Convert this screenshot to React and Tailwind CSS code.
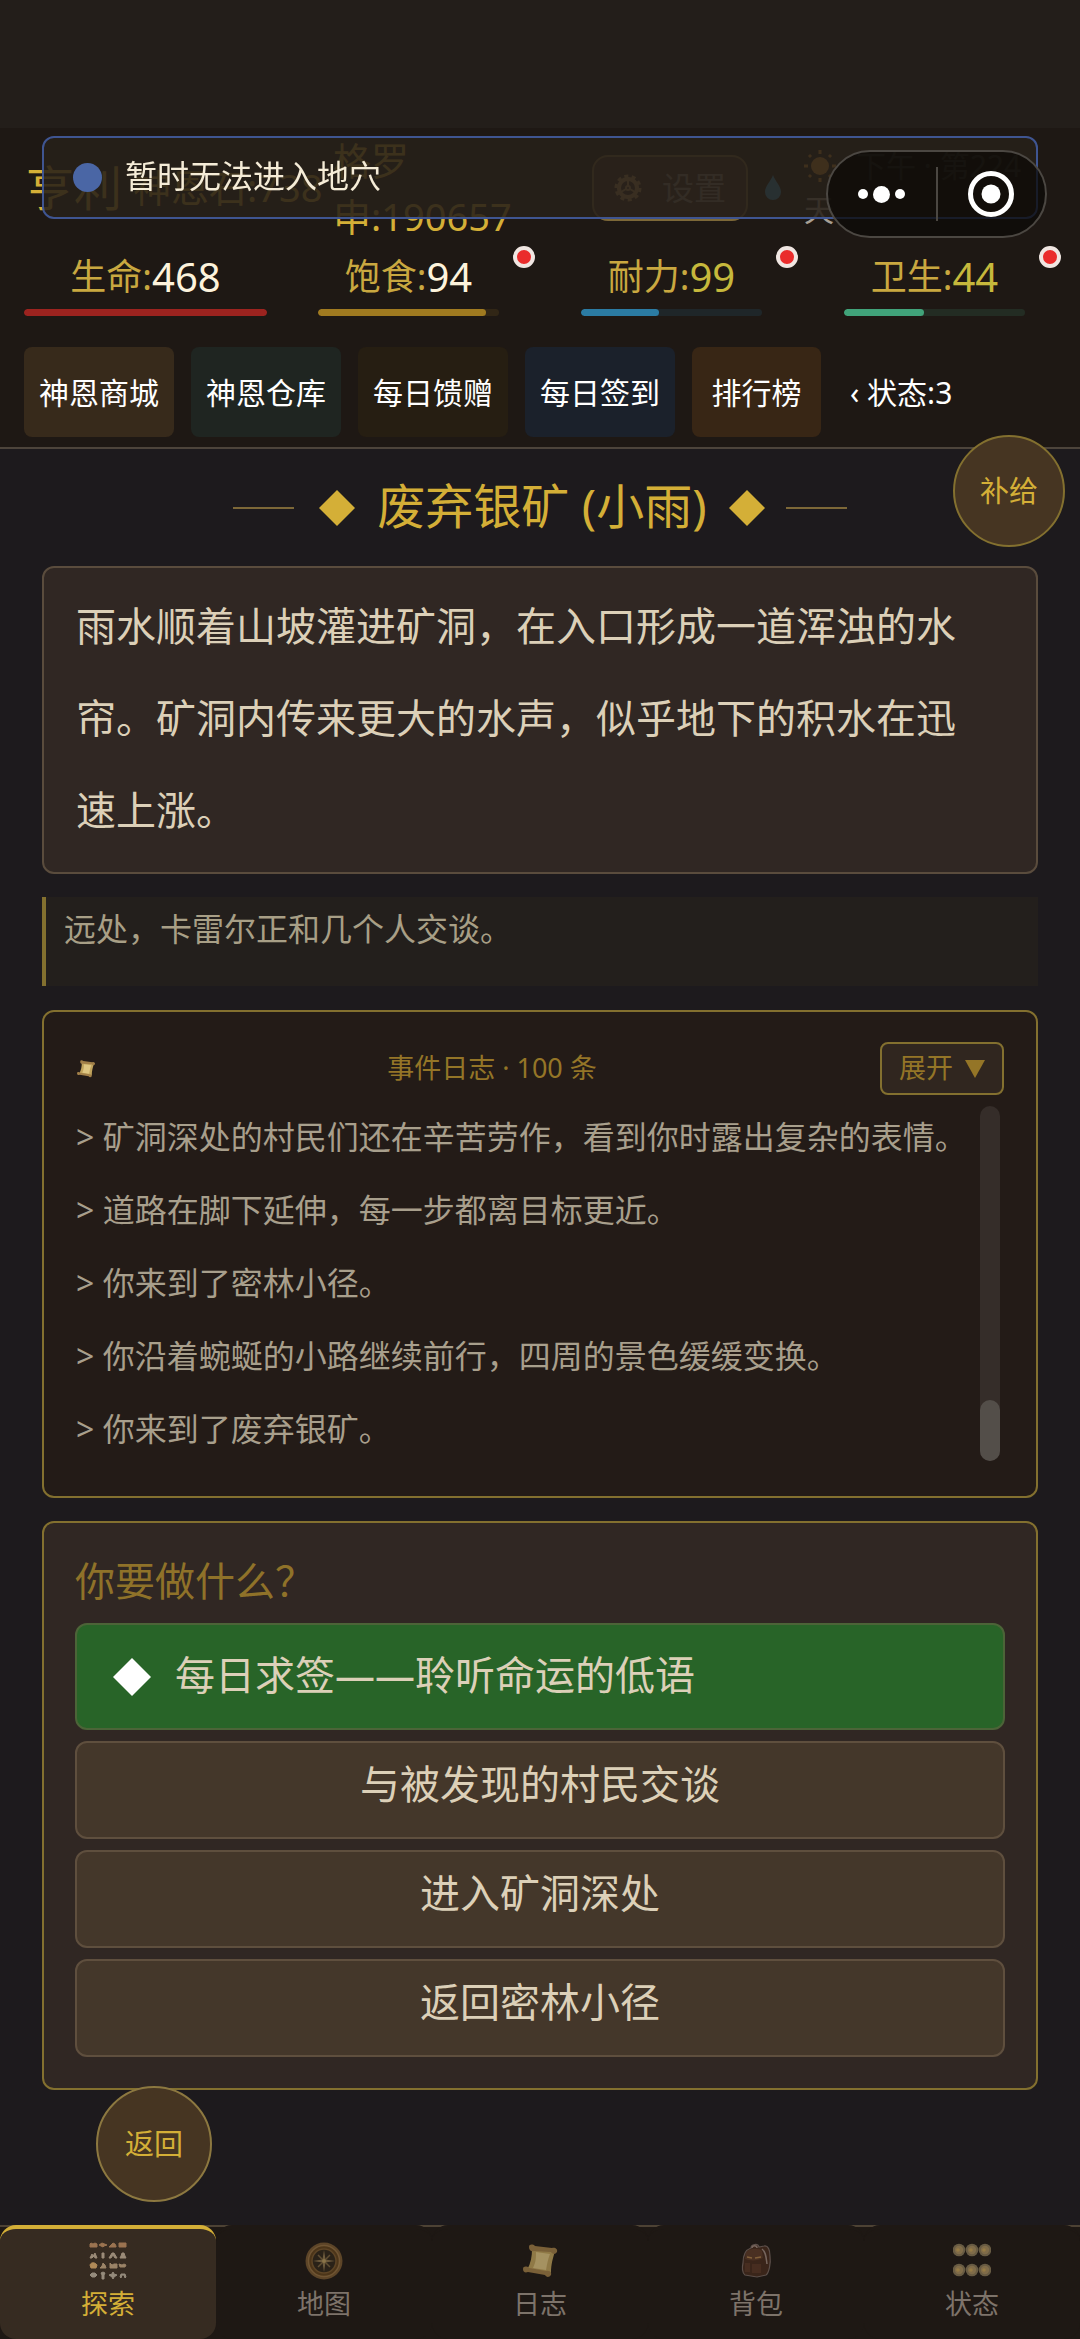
import clsx from 'clsx';

const stats = [
  { label: '生命', value: 468, percent: 100, alert: false, wide: true, bar: 'bg-[#9c231f]', track: 'bg-[#9c231f]/15', text: 'text-[#fdf3dc]' },
  { label: '饱食', value: 94, percent: 93, alert: true, bar: 'bg-[#a07a20]', track: 'bg-[#a07a20]/15', text: 'text-[#fdf3dc]' },
  { label: '耐力', value: 99, percent: 43, alert: true, bar: 'bg-[#2b7ba3]', track: 'bg-[#2b7ba3]/15', text: 'text-[#c6b83c]' },
  { label: '卫生', value: 44, percent: 44, alert: true, bar: 'bg-[#41a37a]', track: 'bg-[#41a37a]/15', text: 'text-[#c6b83c]' },
];

const shortcuts = [
  { label: '神恩商城', bg: 'bg-[#372a1b]' },
  { label: '神恩仓库', bg: 'bg-[#1f2521]' },
  { label: '每日馈赠', bg: 'bg-[#261e12]' },
  { label: '每日签到', bg: 'bg-[#1b212b]' },
  { label: '排行榜', bg: 'bg-[#382615]' },
];

const logs = [
  '矿洞深处的村民们还在辛苦劳作，看到你时露出复杂的表情。',
  '道路在脚下延伸，每一步都离目标更近。',
  '你来到了密林小径。',
  '你沿着蜿蜒的小路继续前行，四周的景色缓缓变换。',
  '你来到了废弃银矿。',
];

const choices = ['与被发现的村民交谈', '进入矿洞深处', '返回密林小径'];

function Diamond({ className }) {
  return (
    <svg viewBox="0 0 38 38" className={className} fill="currentColor" aria-hidden="true">
      <path d="M19 0L38 19L19 38L0 19Z" />
    </svg>
  );
}

function ScrollIcon({ className }) {
  return (
    <svg viewBox="0 0 38 38" className={className} aria-hidden="true">
      <path d="M11 7L34 9C32 16 30 22 30 31L6 28C10 21 11 14 11 7Z" fill="#c0a35c" />
      <path d="M15 10L29 12C27 17 26 22 25 28L12 26C15 20 15 16 15 10Z" fill="#dec682" />
      <path d="M8 5C8 2 12 2 14 4L31 6C34 5 37 7 36 10C34 13 31 12 30 10L13 9C10 10 8 8 8 5Z" fill="#a17f48" />
      <path d="M2 27C2 24 6 24 8 26L25 29C28 28 31 30 30 33C28 36 25 35 24 33L7 30C4 31 2 30 2 27Z" fill="#a17f48" />
    </svg>
  );
}

function ExploreIcon({ className }) {
  return (
    <svg viewBox="0 0 38 38" className={className} aria-hidden="true">
      <g fill="#9a7350" stroke="#9a7350">
        <path d="M1 5V2L2 1L4 2L6 1L8 2V5Z" />
        <path d="M10 3L13 1L18 3L15 4L14 5L12 4Z" />
        <path d="M20 5L22 3L24 1L26 2L27 4V5Z" />
        <path d="M30 1H37V5H30Z" />
      </g>
      <g fill="#9b8b78" stroke="#9b8b78">
        <path d="M1 16L3 12L4 14L6 11L8 16H6L5 14L3 16Z" />
        <path d="M13 11H15V16H13Z" />
        <path d="M20 16L23 11H25L28 16H26L24 13L22 16Z" />
        <path d="M33 11H35L36 14L37 16H31L32 14Z" />
      </g>
      <path d="M1 23C2 20 6 20 8 23L7 26H2Z" fill="#b08a58" stroke="#b08a58" />
      <g fill="#9a8367" stroke="#9a8367">
        <path d="M11 26L13 24L14 21L16 23L17 26Z" />
        <path d="M21 21L23 23L25 22L28 22V26H21Z" />
        <path d="M30 22L33 23L35 22L37 23L36 25H31Z" />
      </g>
      <g fill="#958b7c" stroke="#958b7c">
        <path d="M1 33L3 31H6L8 33L6 35H3Z" />
        <path d="M12 31L14 30L16 31L15 33V37H13V33Z" />
        <path d="M20 33L23 32L24 30L25 32L28 33L25 35L24 37L23 35Z" />
        <path d="M31 35L32 32H36L37 35L36 36L35 33H33L32 36Z" />
      </g>
    </svg>
  );
}

function CompassIcon({ className }) {
  return (
    <svg viewBox="0 0 38 38" className={className} aria-hidden="true">
      <circle cx="19" cy="19" r="18.5" fill="#5d4528" />
      <circle cx="19" cy="19" r="15.5" fill="#4c3519" stroke="#705533" strokeWidth="1.5" />
      <circle cx="19" cy="19" r="12" fill="#2a2218" stroke="#5e4526" strokeWidth="1.5" />
      <path d="M19 8L20.5 17.5L30 19L20.5 20.5L19 30L17.5 20.5L8 19L17.5 17.5Z" fill="#6c5a3c" />
      <path d="M13 13L25 25M25 13L13 25" stroke="#5f4e33" strokeWidth="1.5" />
      <circle cx="19" cy="19" r="2" fill="#8a7448" />
    </svg>
  );
}

function BackpackIcon({ className }) {
  return (
    <svg viewBox="0 0 38 38" className={className} aria-hidden="true">
      <path d="M14 6C14 2 21 1 22 5L27 4C31 3 33 8 33 14C34 21 32 31 29 33L20 35L8 33C5 31 5 25 6 21C6 14 8 8 14 6Z" fill="#3a251a" stroke="#5c4f4a" strokeWidth="1.2" />
      <path d="M9 10C13 6 22 6 25 9L26 16C21 19 13 19 8 17Z" fill="#4a3022" />
      <path d="M8 21H13V30H8ZM15 22H24V31H15Z" fill="#472d20" />
      <path d="M10 15L15 16M18 16L24 15" stroke="#82603a" strokeWidth="1.5" />
      <path d="M15 6C15 3 20 3 20 6M25 7C29 10 29 15 30 22" stroke="#77665e" strokeWidth="1.5" fill="none" />
    </svg>
  );
}

function StatusIcon({ className }) {
  return (
    <svg viewBox="0 0 38 38" className={className} aria-hidden="true">
      {[8, 28].map((y) =>
        [6, 19, 32].map((x) => (
          <g key={`${x}-${y}`}>
            <circle cx={x} cy={y} r="6.3" fill="#685b43" />
            <circle cx={x} cy={y} r="4.2" fill="#806c49" />
            <circle cx={x - 1} cy={y} r="1.8" fill="#967b45" />
          </g>
        ))
      )}
    </svg>
  );
}

function GearIcon({ className }) {
  return (
    <svg viewBox="0 0 28 28" className={className} fill="none" stroke="currentColor" aria-hidden="true">
      <circle cx="14" cy="14" r="9" strokeWidth="4" />
      <circle cx="14" cy="14" r="12" strokeWidth="3" strokeDasharray="4 3.5" />
      <circle cx="14" cy="14" r="2" strokeWidth="2" />
      <path d="M14 12V6M16 15L21 18M12 15L7 18" strokeWidth="2" />
    </svg>
  );
}

function SunIcon({ className }) {
  return (
    <svg viewBox="0 0 32 32" className={className} aria-hidden="true">
      <circle cx="16" cy="16" r="9" fill="#e39a32" />
      <path
        d="M16 0V4M16 28V32M0 16H4M28 16H32M5 5L7 7M25 25L27 27M5 27L7 25M25 7L27 5"
        stroke="#e39a32"
        strokeWidth="3"
      />
    </svg>
  );
}

const tabs = [
  { label: '探索', icon: ExploreIcon, active: true },
  { label: '地图', icon: CompassIcon },
  { label: '日志', icon: ScrollIcon, dim: true },
  { label: '背包', icon: BackpackIcon },
  { label: '状态', icon: StatusIcon },
];

function Stat({ stat }) {
  return (
    <div className={clsx('relative', !stat.wide && 'px-[31px]')}>
      <div className="flex items-center justify-center whitespace-nowrap leading-[60px]">
        <span className="text-[36px]">
          <span className="text-[#c9a840]">{stat.label}:</span>
        </span>
        <span className={clsx('text-[40px]', stat.text)}>{stat.value}</span>
      </div>
      <div className={clsx('mt-[2px] h-[7px] overflow-hidden rounded-full', stat.track)}>
        <div className={clsx('h-full rounded-full', stat.bar)} style={{ width: `${stat.percent}%` }} />
      </div>
      {stat.alert && (
        <span className="absolute -right-[5px] -top-[1px] size-[22px] rounded-full border-4 border-[#f0e6e2] bg-[#ea2c2c]" />
      )}
    </div>
  );
}

function Header() {
  return (
    <header className="border-b-2 border-[#4d443b] bg-[#1e1814] px-6 pb-[10px]">
      <div className="flex h-[119px] items-center">
        <h1 className="ml-[2px] whitespace-nowrap text-5xl text-[#d4af37]">亨利</h1>
        <span className="ml-[11px] w-[188px] whitespace-nowrap text-[38px] text-[#d4af37]">神恩石:738</span>
        <span className="ml-[12px] w-[180px] text-[38px] leading-[56px] text-[#d4af37]">
          格罗
          <br />
          申:190657
        </span>
        <button
          type="button"
          className="ml-[79px] flex h-[66px] w-[156px] shrink-0 items-center justify-center gap-5 rounded-2xl border-2 border-[#7d6838] bg-[#3a2c24] text-[32px] text-[#8c8578]"
        >
          <GearIcon className="size-7 text-[#b9965c]" />
          设置
        </button>
        <svg viewBox="0 0 18 26" className="ml-4 h-[26px] w-[18px] shrink-0" aria-hidden="true">
          <path d="M9 0C11 6 17 11 17 17A8 8 0 0 1 1 17C1 11 7 6 9 0Z" fill="#35a3d8" />
        </svg>
        <div className="ml-[22px] w-[226px] whitespace-nowrap text-[30px] leading-[44px] text-[#a8a094]">
          <div className="flex items-center gap-5">
            <SunIcon className="size-8" />
            下午 · 第224
          </div>
          天
        </div>
      </div>

      <div className="grid grid-cols-4 gap-5">
        {stats.map((stat) => (
          <Stat key={stat.label} stat={stat} />
        ))}
      </div>

      <nav className="mt-[31px] flex items-center gap-[17px] whitespace-nowrap text-[30px] text-white">
        {shortcuts.map(({ label, bg }) => (
          <button key={label} type="button" className={clsx('h-[90px] min-w-[129px] rounded-lg px-[15px]', bg)}>
            {label}
          </button>
        ))}
        <button type="button" className="ml-3">
          ‹ 状态:3
        </button>
      </nav>
    </header>
  );
}

function EventLog() {
  return (
    <section className="mt-6 rounded-xl border-2 border-[#83702f] bg-[#231b17] px-8 pb-[31px] pt-[30px]">
      <div className="flex items-center justify-between text-[27px] text-[#947527]">
        <ScrollIcon className="size-5" />
        <h2 className="ml-2">事件日志 · 100 条</h2>
        <button
          type="button"
          className="flex h-[53px] items-center gap-3 rounded-lg border-2 border-[#83702f] bg-[#30261f] px-[17px]"
        >
          展开
          <svg viewBox="0 0 20 18" className="h-[18px] w-5" fill="currentColor" aria-hidden="true">
            <path d="M0 0H20L10 18Z" />
          </svg>
        </button>
      </div>
      <div className="mt-[5px] flex justify-between">
        <ul className="text-[32px] leading-[73px] text-[#a89f8c]">
          {logs.map((log) => (
            <li key={log}>&gt; {log}</li>
          ))}
        </ul>
        <div className="mb-1 mr-1 mt-[6px] flex w-5 shrink-0 flex-col justify-end rounded-full bg-[#352d29]">
          <div className="h-[61px] rounded-full bg-[#534e49]" />
        </div>
      </div>
    </section>
  );
}

function Choices() {
  return (
    <section className="mt-[23px] rounded-xl border-2 border-[#83702f] bg-[#302723] px-[31px] pb-[31px] pt-7 text-[40px] text-[#dcd0b8]">
      <h2 className="leading-[60px] text-[#8f7229]">你要做什么？</h2>
      <div className="mt-3 flex flex-col gap-[11px]">
        <button
          type="button"
          className="flex h-[107px] items-center gap-6 rounded-xl border-2 border-[#4c6438] bg-[#286428] px-9"
        >
          <Diamond className="size-[38px] text-white" />
          <span className="pb-1">每日求签——聆听命运的低语</span>
        </button>
        {choices.map((choice) => (
          <button
            key={choice}
            type="button"
            className="h-[98px] rounded-xl border-2 border-[#5f4f3e] bg-[#44372a] pb-3"
          >
            {choice}
          </button>
        ))}
      </div>
    </section>
  );
}

function TabBar() {
  return (
    <nav className="fixed inset-x-0 bottom-0 flex h-[114px] border-t-2 border-[#4d4234] bg-[#1e1814]">
      {tabs.map(({ label, icon: Icon, active, dim }) => (
        <a
          key={label}
          href="#"
          className={clsx(
            '-mt-[2px] flex flex-1 flex-col items-center rounded-2xl border-t-4 pt-[13px] text-[27px] leading-[48px]',
            active ? 'border-[#d4af37] bg-[#362b21] text-[#d4af37]' : 'border-[#1e1814] bg-[#1e1814] text-[#7d736a]'
          )}
        >
          <Icon className={clsx('size-[38px]', dim && 'opacity-70')} />
          {label}
        </a>
      ))}
    </nav>
  );
}

function Toast() {
  return (
    <div
      role="status"
      className="fixed inset-x-[42px] top-[136px] flex h-[83px] items-center gap-[23px] rounded-xl border-2 border-[#3f5591] bg-[#272019]/88 px-[29px] text-[32px] text-[#f5ecd7]"
    >
      <span className="size-[29px] rounded-full bg-[#4a66a5]" />
      <span className="pb-1">暂时无法进入地穴</span>
    </div>
  );
}

function Capsule() {
  return (
    <div className="fixed right-[33px] top-[150px] flex h-[88px] w-[221px] items-center rounded-full border-2 border-[#4b4742] bg-[#0c0a07]/75 text-white">
      <button type="button" aria-label="更多" className="flex flex-1 items-center justify-center gap-[5px]">
        <span className="size-[10px] rounded-full bg-white" />
        <span className="size-[17px] rounded-full bg-white" />
        <span className="size-[10px] rounded-full bg-white" />
      </button>
      <span className="h-[54px] w-[2px] bg-[#4b4742]" />
      <button type="button" aria-label="关闭" className="flex flex-1 justify-center">
        <svg viewBox="0 0 46 46" className="size-[46px]" aria-hidden="true">
          <circle cx="23" cy="23" r="20.5" fill="none" stroke="currentColor" strokeWidth="5" />
          <circle cx="23" cy="23" r="9.5" fill="currentColor" />
        </svg>
      </button>
    </div>
  );
}

export default function App() {
  return (
    <div
      lang="zh-CN"
      className="min-h-screen bg-[#1d1a1d] pb-[114px] font-['Noto_Sans','Noto_Sans_CJK_SC',sans-serif]"
    >
      <div className="h-32 bg-[#231e1a]" />
      <Header />

      <main className="px-[42px]">
        <div className="flex h-[117px] items-center justify-center text-[#d4af37]">
          <span className="h-[2px] w-[61px] bg-[#7d6838]" />
          <Diamond className="ml-[25px] size-9" />
          <h2 className="mx-[22px] whitespace-nowrap pb-1 text-5xl">废弃银矿 (小雨)</h2>
          <Diamond className="mr-[21px] size-9" />
          <span className="h-[2px] w-[61px] bg-[#7d6838]" />
        </div>

        <p className="rounded-xl border-2 border-[#5a4c3d] bg-[#302723] pb-4 pl-8 pr-12 pt-3 text-[40px] leading-[92px] text-[#dcd0b8]">
          雨水顺着山坡灌进矿洞，在入口形成一道浑浊的水帘。矿洞内传来更大的水声，似乎地下的积水在迅速上涨。
        </p>

        <p className="mt-[23px] border-l-4 border-[#83702f] bg-[#231f1c] pb-[33px] pl-[18px] pt-2 text-[32px] leading-[48px] text-[#a89f86]">
          远处，卡雷尔正和几个人交谈。
        </p>

        <EventLog />
        <Choices />
      </main>

      <button
        type="button"
        className="fixed right-[15px] top-[435px] size-28 rounded-full border-2 border-[#83702f] bg-[#463522] text-[29px] text-[#d4af37]"
      >
        补给
      </button>
      <button
        type="button"
        className="fixed bottom-[137px] left-24 size-[116px] rounded-full border-2 border-[#8c7840] bg-[#463522] text-[29px] text-[#d4af37]"
      >
        返回
      </button>

      <TabBar />
      <Toast />
      <Capsule />
    </div>
  );
}
